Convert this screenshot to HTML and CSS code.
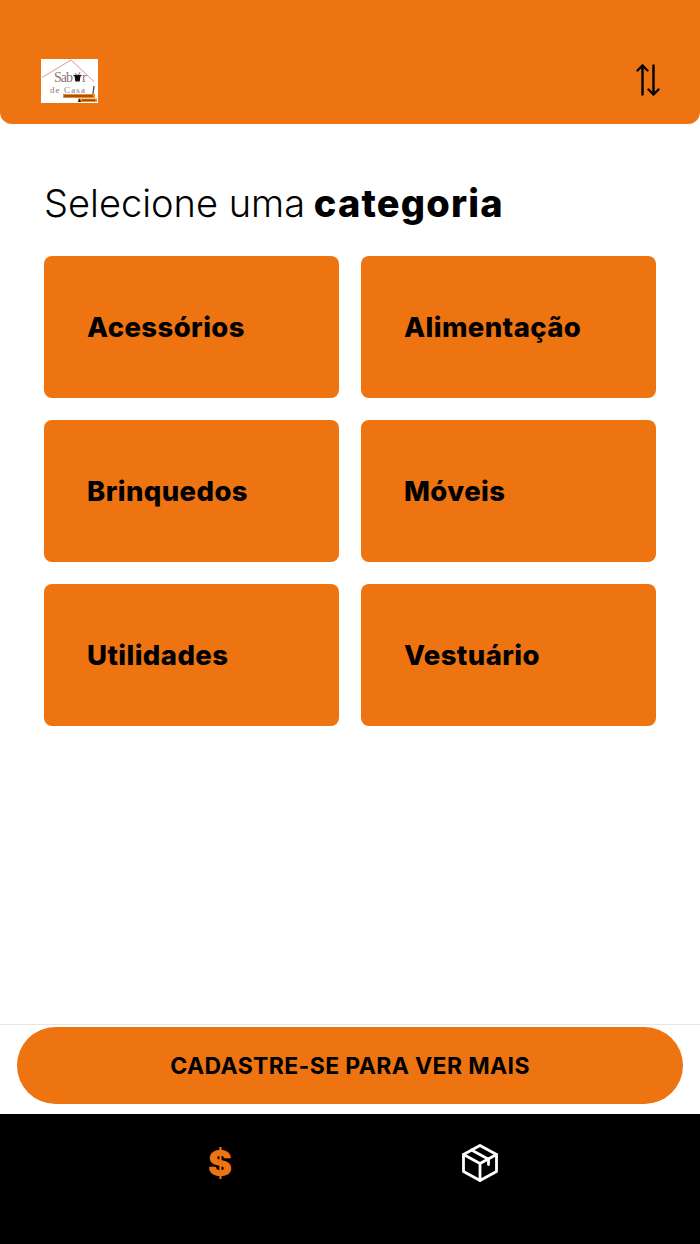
FILE: index.html
```html
<!DOCTYPE html>
<html>
	<head>
		<meta charset="UTF-8">
		<title>Sabor de Casa</title>
		<link rel="stylesheet" href="styles.css">
	</head>
	<body>
		<div class="page">
			<div class="header">
				<svg class="logo" viewBox="0 0 57 44" width="57" height="44">
					<rect width="57" height="44" fill="#fff"/>
					<path d="M1 18.500 L30 1 L53 22.500" fill="none" stroke="#dc7a78" stroke-width="0.8"/>
					<text x="13" y="23" class="logo-big" textLength="19">Sab</text>
					<path d="M33.500 17h6l-.8 5.500h-4.400z" fill="#111"/>
					<path d="M32.500 16.500h8" stroke="#111" stroke-width="1.200"/>
					<path d="M34 14l1.500 2M39 13l-1.500 3" stroke="#666" stroke-width="0.800"/>
					<text x="41" y="23" class="logo-big">r</text>
					<text x="9" y="34" class="logo-mid" textLength="35">de Casa</text>
					<rect x="22" y="35" width="32" height="4" fill="#f08a2c"/>
					<rect x="23" y="36" width="29" height="2" fill="#a5501a"/>
					<rect x="37" y="39.500" width="19" height="3.500" fill="#ef8a18"/>
					<rect x="41" y="40.500" width="13" height="1.500" fill="#8a4a16"/>
					<path d="M37 43l1.500-3.500 1.500 3.500z" fill="#111"/>
					<path d="M53 27l-1 8" stroke="#555" stroke-width="1.400"/>
				</svg>
				<svg class="sort-icon" viewBox="0 0 24 32" width="24" height="32" fill="none" stroke="#000" stroke-width="2.400" stroke-linecap="round" stroke-linejoin="round">
					<path d="M6.500 30.500V1.500M1.500 6.500l5-5 5 5"/>
					<path d="M17.500 1.500v29M12.500 25.500l5 5 5-5"/>
				</svg>
			</div>

			<div class="content">
				<h1 class="title">Selecione uma <b>categoria</b></h1>
				<ul class="categories">
					<li>Acessórios</li>
					<li>Alimentação</li>
					<li>Brinquedos</li>
					<li>Móveis</li>
					<li>Utilidades</li>
					<li>Vestuário</li>
				</ul>
			</div>

			<div class="signup">
				<a class="signup-btn">CADASTRE-SE PARA VER MAIS</a>
			</div>

			<div class="tabbar">
				<span class="tab-dollar">$</span>
				<svg class="tab-box" viewBox="0 0 36 38" width="36" height="38" fill="none" stroke="#fff" stroke-width="2.800" stroke-linecap="round" stroke-linejoin="round">
					<path d="M18 1.500L34.500 10.500V27.500L18 36.500L1.500 27.500V10.500Z"/>
					<path d="M1.500 10.500L18 19.500L34.500 10.500M18 19.500V36.500"/>
					<path d="M9.500 6L26.500 15.200V20.500"/>
				</svg>
			</div>
		</div>
	</body>
</html>
```

FILE: styles.css
```css
* {margin: 0; padding: 0; border: none; box-sizing: border-box;}
ul, li {list-style: none;}
body {
	font-family: "Inter", "Roboto", sans-serif;
	background: #fff;
	color: #000;
}
.page {
	height: 100vh;
	display: flex;
	flex-direction: column;
}

.header {
	height: 124px;
	padding: 59px 40px 0 41px;
	background: #ee7411;
	border-radius: 0 0 12px 12px;
	display: flex;
	justify-content: space-between;
	align-items: flex-start;
}
.logo {display: block;}
.logo-big {
	font-family: "Liberation Serif", serif;
	font-size: 14px;
	fill: #8a7474;
}
.logo-mid {
	font-family: "Liberation Serif", serif;
	font-size: 9px;
	fill: #8a7474;
}
.sort-icon {
	display: block;
	margin-top: 5px;
}

.content {
	flex: 1;
	padding: 56px 44px 0;
}
.title {
	font-size: 38px;
	line-height: 46px;
	font-weight: 300;
	margin-bottom: 30px;
}
.title b {
	margin-left: -2px;
	font-weight: 800;
	letter-spacing: 1.2px;
}
.categories {
	display: grid;
	grid-template-columns: 1fr 1fr;
	gap: 22px;
}
.categories li {
	height: 142px;
	padding-left: 43px;
	background: #ee7411;
	border-radius: 8px;
	display: flex;
	align-items: center;
	font-size: 27.5px;
	font-weight: 800;
	letter-spacing: 0.4px;
}

.signup {
	height: 90px;
	padding: 2px 17px 0;
	border-top: 1px solid #e6e6e6;
}
.signup-btn {
	height: 77px;
	background: #ee7411;
	border-radius: 39px;
	display: flex;
	align-items: center;
	justify-content: center;
	font-size: 23px;
	font-weight: 700;
	letter-spacing: 0.37px;
}

.tabbar {
	height: 130px;
	padding: 30px 202px 0 208px;
	background: #000;
	display: flex;
	justify-content: space-between;
	align-items: flex-start;
}
.tab-dollar {
	font-size: 36px;
	line-height: 38px;
	font-weight: 900;
	color: #ee7411;
}
.tab-box {display: block;}
```
